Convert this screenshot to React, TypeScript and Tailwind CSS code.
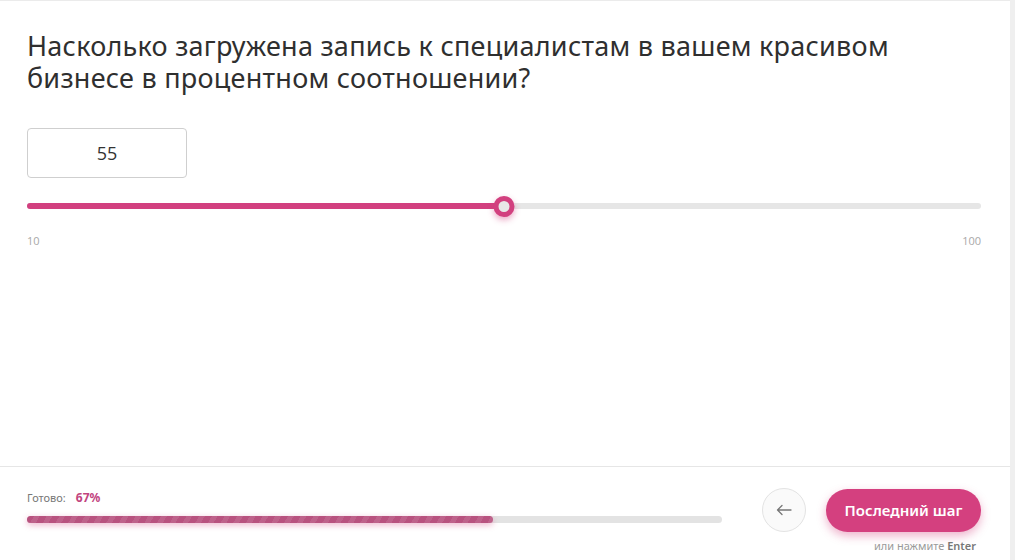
import React from "react";

export default function App() {
  const min = 10;
  const max = 100;
  const value = 55;
  const pct = ((value - min) / (max - min)) * 100;
  return (
    <div className="flex h-[560px] w-[1015px] overflow-hidden bg-white" style={{ fontFamily: '"Noto Sans", sans-serif' }}>
      <div className="flex h-full flex-1 flex-col border-t border-[#ebebeb]">
        <div className="flex-1 pl-[27px] pr-[29px] pt-[29px]">
          <h1 className="max-w-[900px] text-[27px] leading-[32px] font-normal tracking-[0.25px] text-[#2f2f2f]">
            Насколько загружена запись к специалистам в вашем красивом бизнесе в процентном соотношении?
          </h1>
          <div className="mt-[34px] flex h-[50px] w-[160px] items-center justify-center rounded-[4px] border border-[#cfcfcf] text-[18px] text-[#333]" style={{ fontFamily: '"Open Sans", sans-serif' }}>
            55
          </div>
          <div className="relative mt-[24px] h-[8px]">
            <div className="absolute left-0 right-0 top-[1px] h-[6px] rounded-full bg-[#e6e6e6]" />
            <div className="absolute left-0 top-[1px] h-[6px] rounded-full bg-[#d2407f]" style={{ width: `${pct}%` }} />
            <div
              className="absolute top-[-6px] h-[21px] w-[21px] -translate-x-1/2 rounded-full border-[5px] border-[#d2407f] bg-[#e8e8e8] shadow-[0_3px_6px_rgba(210,64,127,0.45)]"
              style={{ left: `${pct}%` }}
            />
          </div>
          <div className="mt-[23px] flex justify-between text-[11px] text-[#a8a8a8]" style={{ fontFamily: '"Open Sans", sans-serif' }}>
            <span>10</span>
            <span>100</span>
          </div>
        </div>
        <div className="flex h-[94px] items-start border-t border-[#e6e6e6] pl-[27px] pr-[29px]">
          <div className="w-[695px] pt-[24px]">
            <div className="flex items-center text-[11px] leading-[14px]">
              <span className="text-[#777]">Готово:</span>
              <span className="ml-[10px] text-[12px] font-bold text-[#c2457f]">67%</span>
            </div>
            <div className="relative mt-[11px] h-[7px] rounded-full bg-[#e3e3e3]">
              <div
                className="absolute left-0 top-0 h-[7px] w-[67%] rounded-full bg-[#b8527f] shadow-[0_2px_6px_rgba(210,64,127,0.4)]"
                style={{
                  backgroundImage:
                    "repeating-linear-gradient(-60deg, rgba(255,255,255,0.09) 0 5px, rgba(255,255,255,0) 5px 11px)",
                }}
              />
            </div>
          </div>
          <div className="ml-auto flex flex-col items-end pt-[21px]">
            <div className="flex items-center">
              <button className="flex h-[44px] w-[44px] items-center justify-center rounded-full border border-[#e3e3e3] bg-[#fafafa] text-[#777]">
                <svg width="16" height="12" viewBox="0 0 16 12" fill="none" stroke="currentColor" strokeWidth="1.3" strokeLinecap="round" strokeLinejoin="round">
                  <path d="M15 6H1.5M6 1.5L1.5 6L6 10.5" />
                </svg>
              </button>
              <button className="ml-[20px] h-[43px] w-[155px] rounded-full bg-[#d4407f] text-[15px] font-semibold text-white shadow-[0_4px_10px_rgba(212,64,127,0.4)]">
                Последний шаг
              </button>
            </div>
            <div className="mt-[6px] mr-[5px] text-[11px] text-[#9a9a9a]">
              или нажмите <span className="font-semibold text-[#777]">Enter</span>
            </div>
          </div>
        </div>
      </div>
      <div className="h-full w-[5px] bg-[#efefef]" />
    </div>
  );
}
